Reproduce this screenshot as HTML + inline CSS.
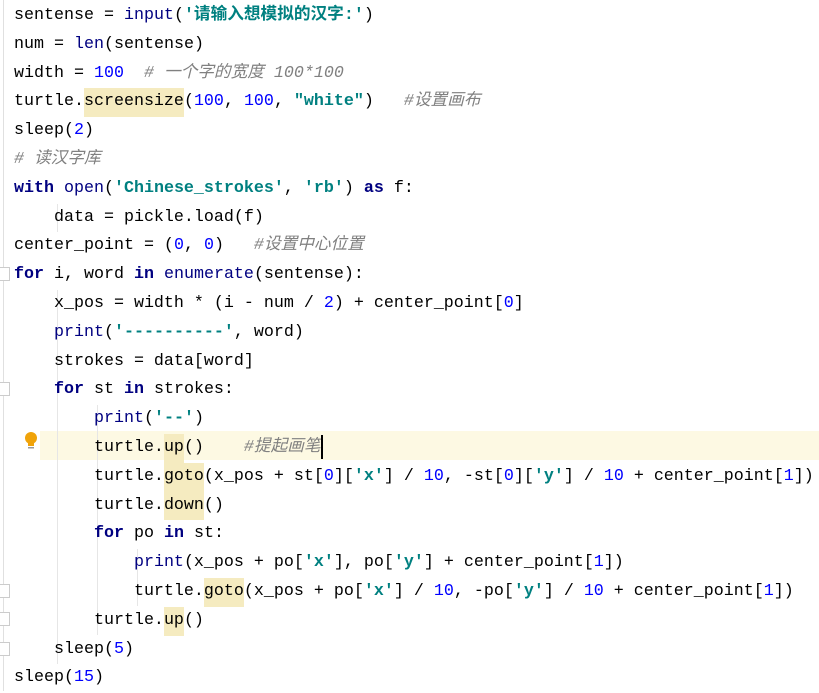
<!DOCTYPE html>
<html><head><meta charset="utf-8"><style>
body{margin:0;background:#fff;width:819px;height:691px;overflow:hidden;position:relative}
.g{position:absolute;left:3px;top:0;width:1px;height:691px;background:#e0e0e0}
.ln{position:absolute;left:14px;margin-top:2px;height:28.8px;line-height:28.8px;white-space:pre;font-family:"Liberation Mono","Noto Sans CJK SC",monospace;font-size:16.67px;color:#000}
.hl{position:absolute;left:40px;right:0;height:28.8px;background:#fdf9e3}
.k{color:#000080;font-weight:bold}
.b{color:#000080}
.n{color:#0000ff}
.s{color:#008080;font-weight:bold}
.c{color:#808080;font-style:italic}
.w{background:#f5ebc0;display:inline-block;height:28.8px}
.ig{position:absolute;width:1px;background:#e6e6e6}
.fm{position:absolute;left:0;width:9px;height:12px;border:1px solid #ccc;border-left:none;background:#fff}
</style></head><body>
<div class="g"></div>
<div class="hl" style="top:431px"></div>
<div class="ig" style="left:57px;top:290px;height:374px"></div>
<div class="ig" style="left:57px;top:204px;height:28px"></div>
<div class="ig" style="left:97px;top:405px;height:230px"></div>
<div class="ig" style="left:137px;top:549px;height:57px"></div>
<div class="fm" style="top:267px"></div>
<div class="fm" style="top:382px"></div>
<div class="fm" style="top:584px"></div>
<div class="fm" style="top:612px"></div>
<div class="fm" style="top:642px"></div>
<svg style="position:absolute;left:23px;top:431px" width="16" height="20"><circle cx="8" cy="7" r="6" fill="#f0a30a"/><rect x="5" y="12" width="6" height="3" fill="#f0a30a"/><rect x="5" y="16" width="6" height="1.5" fill="#999"/></svg>
<div class="ln" style="top:0px">sentense = <span class="b">input</span>(<span class="s">'请输入想模拟的汉字:'</span>)</div>
<div class="ln" style="top:28.8px">num = <span class="b">len</span>(sentense)</div>
<div class="ln" style="top:57.6px">width = <span class="n">100</span>  <span class="c"># 一个字的宽度 100*100</span></div>
<div class="ln" style="top:86.4px">turtle.<span class="w">screensize</span>(<span class="n">100</span>, <span class="n">100</span>, <span class="s">"white"</span>)   <span class="c">#设置画布</span></div>
<div class="ln" style="top:115.2px">sleep(<span class="n">2</span>)</div>
<div class="ln" style="top:144px"><span class="c"># 读汉字库</span></div>
<div class="ln" style="top:172.8px"><span class="k">with</span> <span class="b">open</span>(<span class="s">'Chinese_strokes'</span>, <span class="s">'rb'</span>) <span class="k">as</span> f:</div>
<div class="ln" style="top:201.6px">    data = pickle.load(f)</div>
<div class="ln" style="top:230.4px">center_point = (<span class="n">0</span>, <span class="n">0</span>)   <span class="c">#设置中心位置</span></div>
<div class="ln" style="top:259.2px"><span class="k">for</span> i, word <span class="k">in</span> <span class="b">enumerate</span>(sentense):</div>
<div class="ln" style="top:288px">    x_pos = width * (i - num / <span class="n">2</span>) + center_point[<span class="n">0</span>]</div>
<div class="ln" style="top:316.8px">    <span class="b">print</span>(<span class="s">'----------'</span>, word)</div>
<div class="ln" style="top:345.6px">    strokes = data[word]</div>
<div class="ln" style="top:374.4px">    <span class="k">for</span> st <span class="k">in</span> strokes:</div>
<div class="ln" style="top:403.2px">        <span class="b">print</span>(<span class="s">'--'</span>)</div>
<div class="ln" style="top:432px">        turtle.<span class="w">up</span>()    <span class="c">#提起画笔</span><span style="display:inline-block;width:2px;height:24px;background:#000;vertical-align:middle"></span></div>
<div class="ln" style="top:460.8px">        turtle.<span class="w">goto</span>(x_pos + st[<span class="n">0</span>][<span class="s">'x'</span>] / <span class="n">10</span>, -st[<span class="n">0</span>][<span class="s">'y'</span>] / <span class="n">10</span> + center_point[<span class="n">1</span>])</div>
<div class="ln" style="top:489.6px">        turtle.<span class="w">down</span>()</div>
<div class="ln" style="top:518.4px">        <span class="k">for</span> po <span class="k">in</span> st:</div>
<div class="ln" style="top:547.2px">            <span class="b">print</span>(x_pos + po[<span class="s">'x'</span>], po[<span class="s">'y'</span>] + center_point[<span class="n">1</span>])</div>
<div class="ln" style="top:576px">            turtle.<span class="w">goto</span>(x_pos + po[<span class="s">'x'</span>] / <span class="n">10</span>, -po[<span class="s">'y'</span>] / <span class="n">10</span> + center_point[<span class="n">1</span>])</div>
<div class="ln" style="top:604.8px">        turtle.<span class="w">up</span>()</div>
<div class="ln" style="top:633.6px">    sleep(<span class="n">5</span>)</div>
<div class="ln" style="top:662.4px">sleep(<span class="n">15</span>)</div>
</body></html>
